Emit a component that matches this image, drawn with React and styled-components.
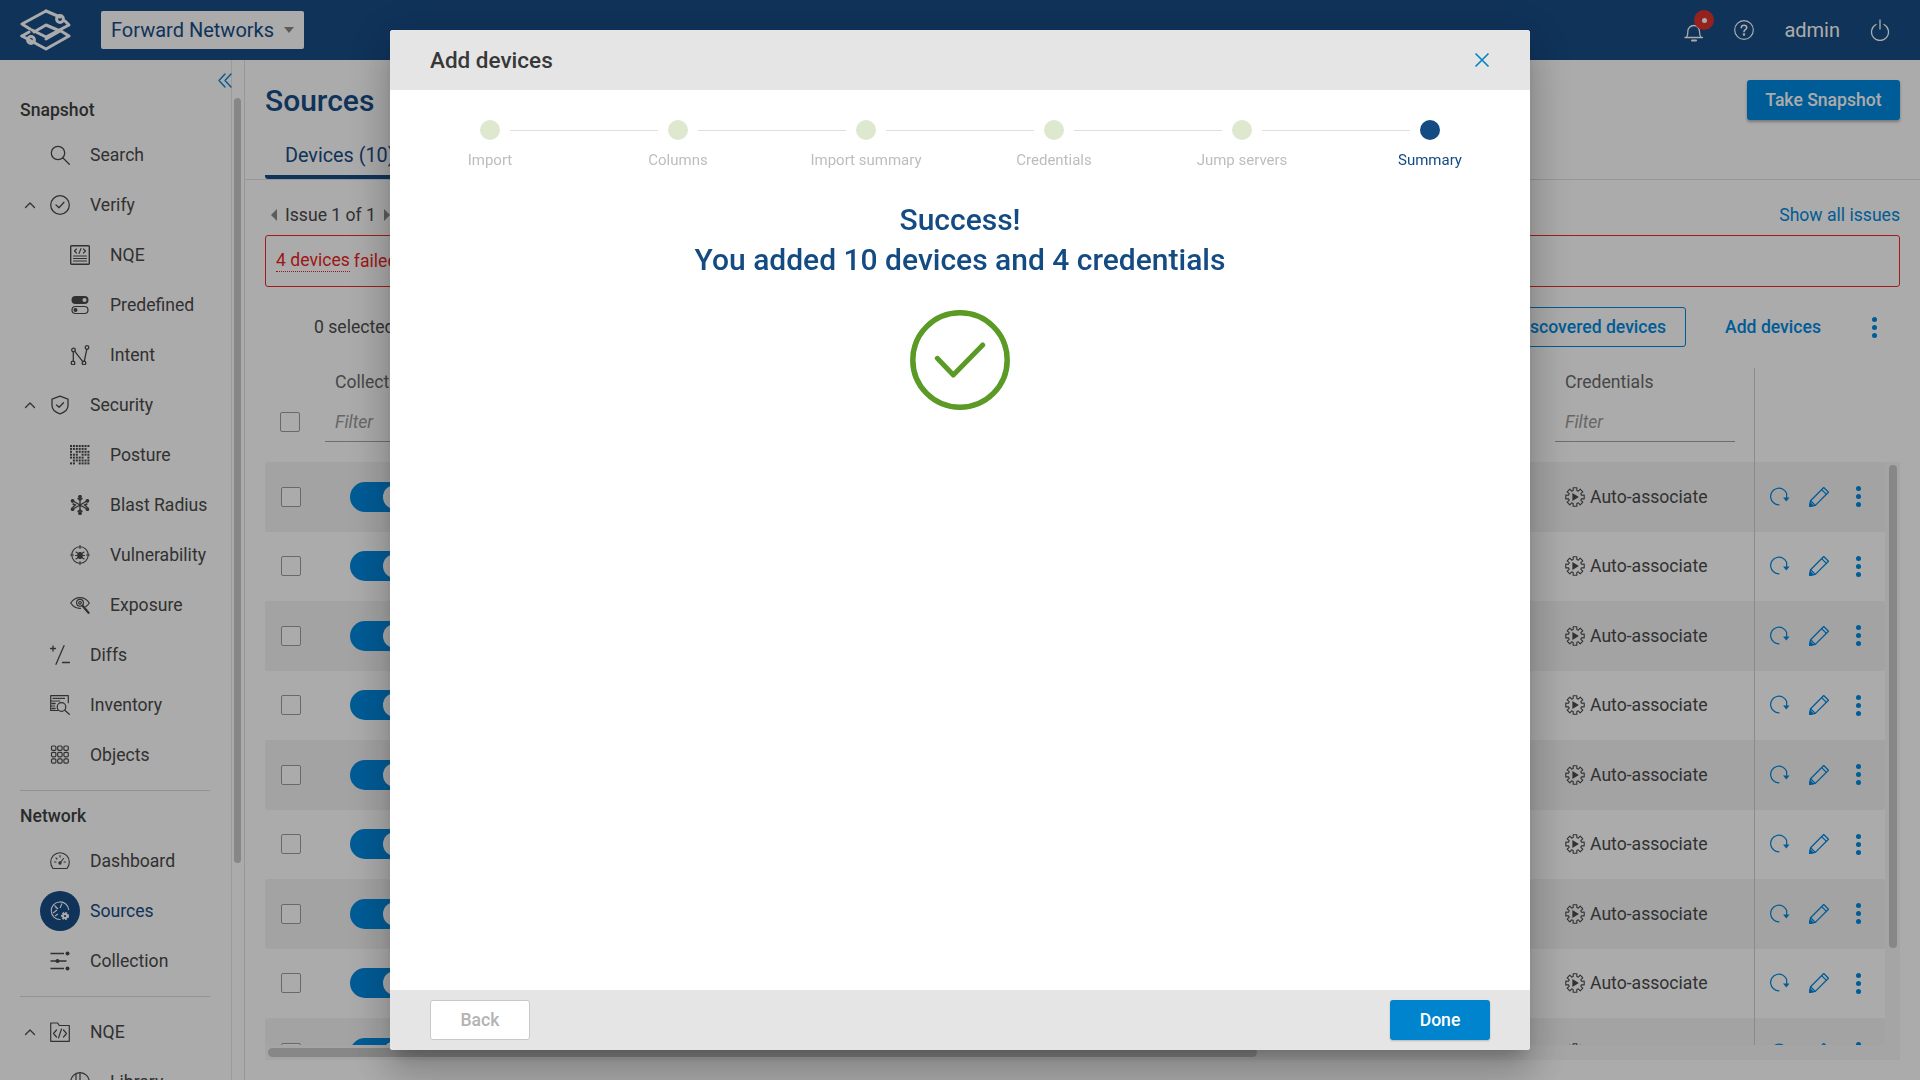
import React from "react";
import styled, { createGlobalStyle } from "styled-components";

const Global = createGlobalStyle`
  html, body { margin: 0; padding: 0; width: 1920px; height: 1080px; overflow: hidden; background: #fff; }
  body { font-family: Roboto, "Liberation Sans", sans-serif; color: #4d4d4d; }
  * { box-sizing: border-box; }
`;

const Page = styled.div`
  width: 1920px; height: 1080px; display: flex; flex-direction: column; overflow: hidden; position: relative;
`;
const TopBar = styled.header`
  height: 60px; flex: none; background: #184c86; display: flex; align-items: center; padding: 0 30px 0 20px; color: #fff;
`;
const OrgSelect = styled.div`
  margin-left: 29px; width: 203px; height: 38px; background: #fff; border-radius: 2px; color: #184c86;
  display: flex; align-items: center; justify-content: space-between; padding: 0 10px 0 10px; font-size: 20px;
`;
const Caret = styled.span`
  width: 0; height: 0; border-left: 5.5px solid transparent; border-right: 5.5px solid transparent; border-top: 6px solid #8a8a8a;
`;
const TopRight = styled.div`
  margin-left: auto; display: flex; align-items: center; color: #fff;
`;
const BellWrap = styled.div`
  position: relative; width: 20px; height: 24px; display: flex; margin-right: 30px; margin-top: 4px;
`;
const Badge = styled.span`
  position: absolute; left: 10px; top: -10px; width: 20px; height: 20px; border-radius: 50%; background: #e0332d;
  display: flex; align-items: center; justify-content: center;
  &::after { content: ""; width: 5px; height: 5px; border-radius: 50%; background: #fff; }
`;
const Admin = styled.span`
  font-size: 20px; margin: 0 30px 0 30px;
`;

const Body = styled.div`
  flex: 1; display: flex; min-height: 0; background: #fff;
`;
const Sidebar = styled.aside`
  width: 245px; flex: none; display: flex; border-right: 1px solid #e2e2e2; overflow: hidden; position: relative;
`;
const Nav = styled.nav`
  width: 231px; flex: none; display: flex; flex-direction: column; padding-top: 30px;
`;
const Collapse = styled.button`
  position: absolute; right: 11px; top: 12px; background: none; border: 0; padding: 0; color: #0a86d8; display: flex;
`;
const SideTrack = styled.div`
  flex: 1; border-left: 1px solid #e8e8e8; padding: 38px 3px 0 2px;
`;
const SideThumb = styled.div`
  height: 765px; background: #c9c9c9; border-radius: 4px;
`;
const NavHead = styled.div`
  height: 40px; flex: none; padding-left: 20px; display: flex; align-items: center; font-size: 17.6px; font-weight: 500; color: #404040;
  margin-top: ${p => p.$mt || 0}px;
`;
const NavRow = styled.div`
  height: 50px; flex: none; display: flex; align-items: center; font-size: 17.6px;
  color: ${p => (p.$active ? "#184c86" : "#4a4a4a")};
  padding-left: ${p => (p.$sub ? 70 : 50)}px; position: relative;
`;
const NavIcon = styled.span`
  width: 20px; height: 20px; flex: none; display: flex; align-items: center; justify-content: center; margin-right: 20px; position: relative; color: ${p => (p.$active ? "#fff" : "#4a4a4a")};
  ${p => p.$active && `
    &::before { content: ""; position: absolute; left: -10px; top: -10px; width: 40px; height: 40px; border-radius: 50%; background: #184c86; }
    svg { position: relative; }
  `}
`;
const Chevron = styled.span`
  position: absolute; left: 23px; top: 18px; display: flex; color: #4a4a4a;
`;
const NavRule = styled.hr`
  border: 0; height: 1px; background: #dcdcdc; margin: ${p => p.$m} 21px ${p => p.$m} 20px; flex: none; width: 190px;
`;

const Main = styled.main`
  flex: 1; min-width: 0; display: flex; flex-direction: column;
`;
const MainHead = styled.div`
  height: 120px; flex: none; border-bottom: 1px solid #e0e0e0; padding: 20px 20px 0; display: flex; flex-direction: column; position: relative;
`;
const TitleRow = styled.div`
  display: flex; justify-content: space-between; align-items: flex-start; height: 64px;
`;
const Title = styled.h1`
  margin: 1px 0 0; font-size: 30px; font-weight: 500; line-height: 40px; color: #184c86;
`;
const Snapshot = styled.button`
  width: 153px; height: 40px; border: 0; border-radius: 3px; background: #0089e0; color: #fff; font: 500 17.6px Roboto, sans-serif;
  box-shadow: 0 2px 3px rgba(0,0,0,.3); margin-right: 0;
`;
const Tab = styled.div`
  width: 180px; height: 36px; padding-left: 20px; border-bottom: 4px solid #184c86; border-radius: 0 0 0 3px; font-size: 19.800px; color: #184c86; line-height: 25px; margin-top: -1px;
`;
const Section = styled.div`
  padding: 0 20px; flex: none;
`;
const IssueRow = styled(Section)`
  height: 55px; padding-top: 20px; display: flex; align-items: flex-start; justify-content: space-between; line-height: 30px;
`;
const Pager = styled.div`
  display: flex; align-items: center; gap: 8px; font-size: 17.6px; color: #4a4a4a; padding-left: 6px; height: 30px;
`;
const Tri = styled.span`
  width: 0; height: 0; border-top: 6px solid transparent; border-bottom: 6px solid transparent;
  ${p => (p.$right ? "border-left: 6px solid #8a8a8a;" : "border-right: 6px solid #8a8a8a;")}
`;
const LinkText = styled.a`
  font-size: 17.6px; color: #0089e0;
`;
const ErrorBox = styled.div`
  margin: 0 20px; height: 52px; flex: none; border: 1px solid #f12a2a; border-radius: 3px; display: flex; align-items: center; padding-left: 10px; font-size: 17.6px; color: #ee1f25;
`;
const Dotted = styled.span`
  border-bottom: 1px dotted #ee1f25; margin-right: 4px; line-height: 21px;
`;
const Toolbar = styled(Section)`
  margin-top: 20px; height: 40px; display: flex; align-items: center; padding-left: 69px; padding-right: 36px; font-size: 17.6px;
`;
const Outlined = styled.button`
  margin-left: auto; width: 190px; height: 40px; border: 1px solid #0089e0; border-radius: 3px; background: #fff; color: #0089e0; font: 500 17.6px Roboto, sans-serif; white-space: nowrap; padding: 0 19px 0 0; text-align: right;
`;
const TextBtn = styled.span`
  margin: 0 43px 0 39px; font-size: 17.6px; font-weight: 500; color: #0089e0;
`;
const Kebab = styled.span`
  width: 20px; display: flex; flex-direction: column; align-items: center; gap: 3px;
  i { width: ${p => p.$d || 5}px; height: ${p => p.$d || 5}px; border-radius: 50%; background: #0089e0; display: block; }
`;
const GridRow = styled.div`
  display: grid; grid-template-columns: 60px 1fr 199px 131px; width: 1620px;
`;
const TableHead = styled(GridRow)`
  margin: 21px 0 0 20px; height: 94px; flex: none;
`;
const HeadCell = styled.div`
  display: flex; flex-direction: column; padding-top: 2px;
`;
const HeadLabel = styled.div`
  font-size: 17.6px; color: #6b6b6b; height: 24px; line-height: 24px; padding-left: 10px;
`;
const FilterBox = styled.div`
  margin-top: 12px; height: 36px; width: ${p => p.$w}px; border-bottom: 1px solid #a5a5a5; padding-left: 10px; font: italic 17.6px/32px Roboto, sans-serif; color: #9a9a9a;
`;
const CheckBox = styled.span`
  width: 20px; height: 20px; border: 1.5px solid #9d9d9d; border-radius: 2px; background: #fff; display: block; flex: none;
`;
const HeadCheck = styled.div`
  padding: 44px 0 0 15px;
`;
const ActionsHead = styled.div`
  border-left: 1px solid #d0d0d0;
`;
const TableZone = styled.div`
  margin-left: 20px; height: 583px; flex: none; display: flex; width: 1635px;
`;
const Rows = styled.div`
  width: 1620px; overflow: hidden;
`;
const Row = styled(GridRow)`
  height: 69.5px; background: ${p => (p.$odd ? "#f3f3f3" : "#fff")}; border-radius: ${p => (p.$odd ? "3px" : 0)};
`;
const CheckCell = styled.div`
  display: flex; align-items: center; padding-left: 16px;
`;
const ToggleCell = styled.div`
  display: flex; align-items: center; padding-left: 25px;
`;
const Toggle = styled.span`
  width: 60px; height: 30px; border-radius: 15px; background: #0089e0; display: flex; align-items: center; justify-content: flex-end; padding-right: 3px;
  &::after { content: ""; width: 24px; height: 24px; border-radius: 50%; background: #fff; }
`;
const CredCell = styled.div`
  display: flex; align-items: center; gap: 5px; padding-left: 10px; font-size: 17.6px; color: #4a4a4a;
`;
const ActionCell = styled.div`
  border-left: 1px solid #d0d0d0; display: flex; align-items: center; color: #0089e0; padding-left: 15px; gap: 19px;
`;
const VTrack = styled.div`
  flex: 1; padding: 3px 3px 0 4px; background: #f7f7f7;
`;
const VThumb = styled.div`
  height: 483px; border-radius: 4px; background: #c9c9c9;
`;
const HTrack = styled.div`
  margin-left: 20px; width: 1635px; height: 15px; flex: none; background: #f7f7f7; padding: 3px 0 0 3px;
`;
const HThumb = styled.div`
  height: 9px; width: 989px; border-radius: 5px; background: #c9c9c9;
`;

const Backdrop = styled.div`
  position: fixed; inset: 0; background: rgba(0,0,0,.33); display: flex; align-items: center; justify-content: center;
`;
const Modal = styled.div`
  width: 1140px; height: 1020px; background: #fff; border-radius: 3px; overflow: hidden; display: flex; flex-direction: column;
  box-shadow: 0 11px 15px -7px rgba(0,0,0,.2), 0 24px 38px 3px rgba(0,0,0,.14), 0 9px 46px 8px rgba(0,0,0,.12);
`;
const ModalHead = styled.div`
  height: 60px; flex: none; background: #e5e5e5; display: flex; align-items: center; justify-content: space-between; padding: 0 39px 0 40px;
  font-size: 22.500px; font-weight: 500; color: #383838;
`;
const Close = styled.span`
  display: flex; color: #0a86c8;
`;
const Stepper = styled.div`
  display: grid; grid-template-columns: repeat(6, 188px); padding: 30px 6px 0; flex: none;
`;
const Step = styled.div`
  display: flex; flex-direction: column; align-items: center;
`;
const DotRow = styled.div`
  display: flex; align-items: center; gap: 10px; width: 100%; height: 20px;
`;
const Line = styled.span`
  flex: 1; height: 1px; background: ${p => (p.$hide ? "transparent" : "#dedede")};
`;
const Dot = styled.span`
  width: 20px; height: 20px; border-radius: 50%; background: ${p => (p.$active ? "#134b82" : "#dde8cf")}; flex: none;
`;
const StepLabel = styled.span`
  margin-top: 10px; font-size: 15px; line-height: 20px; color: ${p => (p.$active ? "#134b82" : "#bdbdbd")};
`;
const Content = styled.div`
  flex: 1; display: flex; flex-direction: column; align-items: center; padding-top: 30px;
`;
const Headline = styled.div`
  font-size: 30px; font-weight: 500; line-height: 40px; color: #134b82; text-align: center;
`;
const SuccessIcon = styled.svg`
  margin-top: 30px; width: 100px; height: 100px;
`;
const ModalFoot = styled.div`
  height: 60px; flex: none; background: #e5e5e5; display: flex; align-items: center; justify-content: space-between; padding: 0 40px;
`;
const BackBtn = styled.button`
  width: 100px; height: 40px; background: #fff; border: 1px solid #c8c8c8; border-radius: 3px; color: #b3b3b3; font: 500 17.6px Roboto, sans-serif;
`;
const DoneBtn = styled.button`
  width: 100px; height: 40px; background: #0084cd; border: 0; border-radius: 3px; color: #fff; font: 500 17.6px Roboto, sans-serif; box-shadow: 0 1px 2px rgba(0,0,0,.2);
`;

const S = ({ children, size = 20, sw = 1.3, vb = 20 }) => (
  <svg width={size} height={size} viewBox={`0 0 ${vb} ${vb}`} fill="none" stroke="currentColor" strokeWidth={sw} strokeLinecap="round" strokeLinejoin="round">{children}</svg>
);

const Logo = () => (
  <svg width="52" height="42" viewBox="0 0 52 42" fill="none" stroke="#fff" strokeWidth="3" strokeLinejoin="round" strokeLinecap="round">
    <path d="M26 2 L40 8" /><path d="M45 12 L49 16 L26 28 L12 21" />
    <path d="M26 2 L2 15 L10 20" />
    <path d="M14 23 L26 16 L40 22 L26 30" />
    <path d="M2 27 L26 40 L49 27 L41 22" />
    <path d="M2 27 L9 23" />
    <circle cx="40" cy="10" r="3.4" /><circle cx="11" cy="31" r="3.4" />
  </svg>
);

const ISearch = () => <S><circle cx="8" cy="8" r="6.7" /><path d="M13 13l6.3 6.3" /></S>;
const ICheckC = () => <S><circle cx="10" cy="10" r="9.3" /><path d="M6 10l3 2.8 5-5.5" /></S>;
const ICode = () => <S><rect x=".7" y=".7" width="18.6" height="18.6" rx=".8" strokeWidth="1.4" /><path d="M6.5 4l-2 2 2 2M13.5 4l2 2-2 2M11 3.5l-2 5M3.5 11h13M3.5 13.5h13M3.5 16h13" strokeWidth="1.1" /></S>;
const IPre = () => (
  <svg width="20" height="20" viewBox="0 0 20 20">
    <rect x="1.5" y="1" width="17" height="8" rx="4" fill="currentColor" /><circle cx="14.5" cy="5" r="2" fill="#fff" />
    <rect x="2" y="11.5" width="16" height="7" rx="3.5" fill="none" stroke="currentColor" strokeWidth="1.2" /><circle cx="5.5" cy="15" r="2" fill="currentColor" />
  </svg>
);
const IIntent = () => <S><circle cx="3.5" cy="5" r="1.8" /><circle cx="17" cy="2.5" r="1.8" /><circle cx="3" cy="18" r="1.8" /><circle cx="14" cy="18" r="1.8" /><path d="M3.3 7v9M4.8 6.3l8.2 10.5M14.3 16l2.5-11.6" /></S>;
const IShield = () => <S><path d="M10 1.2l8 3v6.3c0 4-3.3 6.8-8 8.4-4.7-1.6-8-4.4-8-8.4V4.2z" /><path d="M6.5 10l2.6 2.3 4.4-4.6" /></S>;
const IPosture = () => {
  const c = [];
  for (let y = 0; y < 7; y++) for (let x = 0; x < 7; x++) {
    if ((x * 2 + y * 3) % 7 === 1 && y > 0) continue;
    c.push(<rect key={`${x}-${y}`} x={x * 2.9} y={y * 2.9} width="2" height="2" fill="currentColor" />);
  }
  return <svg width="20" height="20" viewBox="0 0 20 20">{c}</svg>;
};
const IBlast = () => (
  <S sw={1.4}>
    <path d="M10 2v16M3 6l14 8M17 6L3 14M8 3.5l2 2 2-2M8 16.5l2-2 2 2M3 9l2.5 1L3 12M17 9l-2.5 1 2.5 2" />
    <circle cx="10" cy="1.8" r="1.2" fill="currentColor" /><circle cx="10" cy="18.2" r="1.2" fill="currentColor" />
    <circle cx="2.6" cy="5.8" r="1.2" fill="currentColor" /><circle cx="17.4" cy="5.8" r="1.2" fill="currentColor" />
    <circle cx="2.6" cy="14.2" r="1.2" fill="currentColor" /><circle cx="17.4" cy="14.2" r="1.2" fill="currentColor" />
  </S>
);
const IVuln = () => (
  <S sw={1.1}>
    <circle cx="10" cy="10" r="8.2" /><path d="M10 .5v3M10 16.5v3M.5 10h3M16.5 10h3" />
    <ellipse cx="10" cy="10.5" rx="2.2" ry="3" fill="currentColor" /><path d="M6 7l2 1.5M14 7l-2 1.5M5.5 10.5h2M14.5 10.5h-2M6 14l2-1.5M14 14l-2-1.5" />
  </S>
);
const IEye = () => (
  <S sw={1.2}>
    <path d="M.7 8C3 4.5 6.3 2.7 10 2.7S17 4.5 19.3 8c-1 1.6-2.2 2.8-3.6 3.7M10.500 13.300C6.500 13.500 3 11.500.7 8" />
    <circle cx="10" cy="7.800" r="3.400" /><circle cx="10" cy="7.800" r="1.300" /><path d="M12.800 11l5.700 6.800" strokeWidth="2.200" />
  </S>
);
const IDiff = () => <S sw={1.3}><path d="M3 1v5M.5 3.500h5M14 .7L6 19.300M12.500 17.500h7" /></S>;
const IInv = () => (
  <S sw={1.2}>
    <path d="M8 15.500H.7V.7h17.600v7" /><path d="M.7 6h10M.7 11h5M3 3.300h12" strokeDasharray="1.500 1" />
    <circle cx="11.500" cy="12" r="4.300" /><path d="M14.800 15.300l4.500 4" />
    <path d="M2 8.500h3M2 13.500h3" strokeWidth="1.500" />
  </S>
);
const IObj = () => {
  const c = [];
  for (let y = 0; y < 3; y++) for (let x = 0; x < 3; x++) c.push(<rect key={`${x}${y}`} x={1.5 + x * 6.2} y={1 + y * 6.4} width="4.400" height="4.400" rx="1.200" />);
  return <S sw={1.2}>{c}</S>;
};
const IGauge = () => (
  <S sw={1.1}>
    <path d="M3 17.500C1.500 15.700.7 13.500.7 11a9.300 9.300 0 0 1 18.600 0c0 2.500-.8 4.700-2.300 6.500z" />
    <path d="M10 4.500v1.500M4.500 11h1.500M14 11h1.500M6 7l1 1M10 12l3.500-4.500" /><circle cx="10" cy="12" r="1.100" fill="currentColor" />
  </S>
);
const ISources = () => (
  <svg width="20" height="20" viewBox="0 0 20 20" fill="none" stroke="currentColor" strokeWidth="1.1">
    <path d="M10.500 18.500A8.800 8.800 0 1 1 18.800 9" />
    <path d="M4.500 4.500l3.500 3.500M12 2.500l-2 4.500M3 12l4-3M6 7.500v-2M8 13l-3 2" />
    <circle cx="15" cy="15" r="3" fill="currentColor" strokeWidth="2" strokeDasharray="1.800 1" />
    <circle cx="15" cy="15" r="1.100" fill="#184c86" stroke="none" />
  </svg>
);
const ICollect = () => (
  <svg width="20" height="20" viewBox="0 0 20 20" stroke="currentColor" strokeWidth="1.300" fill="currentColor">
    <path d="M.5 2.500H14M.5 10h16M.5 17.500H14" /><circle cx="17.500" cy="2.500" r="2" stroke="none" /><circle cx="7.500" cy="10" r="2" stroke="none" /><circle cx="17.500" cy="17.500" r="2" stroke="none" />
  </svg>
);
const IFolder = () => <S sw={1.2}><path d="M.7 19.300V1h7l1.500 2.500h10.100v15.800z" /><path d="M6.500 8l-3 3.500 3 3.500M13.500 8l3 3.500-3 3.500M11.500 7l-3 9" /></S>;
const ILib = () => <S sw={1.2}><circle cx="10" cy="10" r="9.300" /><path d="M10 .7V10h9M6 2v16" /></S>;
const IChevUp = () => <svg width="14" height="14" viewBox="0 0 14 14" fill="none" stroke="currentColor" strokeWidth="1.300" strokeLinecap="round" strokeLinejoin="round"><path d="M2.500 9.500L7 5l4.500 4.500" /></svg>;
const ICollapse = () => <svg width="16" height="18" viewBox="0 0 16 18" fill="none" stroke="currentColor" strokeWidth="1.400" strokeLinecap="round" strokeLinejoin="round"><path d="M8 2L2 8.500 8 15M14 2L8 8.500l6 6.500" /></svg>;
const IBell = () => (
  <svg width="20" height="24" viewBox="0 0 20 24" fill="none" stroke="currentColor" strokeWidth="1.300" strokeLinecap="round" strokeLinejoin="round">
    <path d="M1 17.500h17.500M2.500 17.500c1.500-2 1.300-4 1.300-6 0-3.500 2.700-6 6-6 3 0 5.700 2.500 5.700 6 0 2 .1 4 1.500 6" /><path d="M8 20.500h4" strokeWidth="2" />
  </svg>
);
const IHelp = () => (
  <svg width="20" height="20" viewBox="0 0 20 20" fill="none" stroke="currentColor" strokeWidth="1.200" strokeLinecap="round">
    <circle cx="10" cy="10" r="9.300" /><path d="M7.300 7.800c0-1.500 1.200-2.600 2.700-2.600s2.700 1.100 2.700 2.500c0 2-2.700 2-2.700 4" strokeWidth="1.600" /><circle cx="10" cy="14.500" r=".7" fill="currentColor" />
  </svg>
);
const IPower = () => (
  <svg width="20" height="22" viewBox="0 0 20 22" fill="none" stroke="currentColor" strokeWidth="1.300" strokeLinecap="round">
    <path d="M6 5.500a8.500 8.500 0 1 0 8 0M10 1v9" />
  </svg>
);
const IX = () => <svg width="18" height="18" viewBox="0 0 18 18" fill="none" stroke="currentColor" strokeWidth="1.700"><path d="M2.500 2.500l13 13M15.500 2.500l-13 13" /></svg>;

const gearPath = (() => {
  const pts = [];
  for (let i = 0; i < 8; i++) {
    const c = (i * Math.PI) / 4;
    [[-0.27, 6.7], [-0.2, 9.4], [0.2, 9.4], [0.27, 6.7]].forEach(([da, r]) => {
      pts.push(`${(r * Math.sin(c + da)).toFixed(2)} ${(-r * Math.cos(c + da)).toFixed(2)}`);
    });
  }
  return `M${pts.join("L")}Z`;
})();
const IAuto = () => (
  <svg width="20" height="20" viewBox="-10 -10 20 20" fill="none" stroke="currentColor" strokeWidth="1.100" strokeLinejoin="round">
    <path d={gearPath} />
    <path d="M-2.600 -3.900L3.900 0L-2.600 3.900Z" fill="currentColor" stroke="none" />
  </svg>
);
const IRedo = () => (
  <svg width="20" height="20" viewBox="0 0 20 20" fill="none" stroke="currentColor" strokeWidth="1.200" strokeLinecap="round">
    <path d="M10 18.300a8.300 8.300 0 1 1 7.600-11.500L17.700 11" transform="translate(-1 -.5)" />
    <path d="M13 10.500h6.500l-3.200 4z" fill="currentColor" stroke="none" />
  </svg>
);
const IEdit = () => (
  <svg width="20" height="20" viewBox="0.5 0.5 19 19" fill="none" stroke="currentColor" strokeWidth="1.200" strokeLinejoin="round">
    <path d="M1 19l1-5.500L14.500 1l4.500 4.500L6.500 18z" /><path d="M12.500 3l4.500 4.500M2 13.500l4.500 4.500" /><path d="M1 19l.7-3.300 2.600 2.600z" fill="currentColor" />
  </svg>
);

const Dots = ({ d }) => <Kebab $d={d}><i /><i /><i /></Kebab>;

const top = [
  ["Search", ISearch], ["Verify", ICheckC, "g"], ["NQE", ICode, "s"], ["Predefined", IPre, "s"], ["Intent", IIntent, "s"],
  ["Security", IShield, "g"], ["Posture", IPosture, "s"], ["Blast Radius", IBlast, "s"], ["Vulnerability", IVuln, "s"], ["Exposure", IEye, "s"],
  ["Diffs", IDiff], ["Inventory", IInv], ["Objects", IObj],
];
const net = [["Dashboard", IGauge], ["Sources", ISources, "a"], ["Collection", ICollect]];
const steps = ["Import", "Columns", "Import summary", "Credentials", "Jump servers", "Summary"];

const Item = ({ label, Icon, kind }) => (
  <NavRow $sub={kind === "s"} $active={kind === "a"}>
    {kind === "g" && <Chevron><IChevUp /></Chevron>}
    <NavIcon $active={kind === "a"}><Icon /></NavIcon>
    {label}
  </NavRow>
);

export default function App() {
  return (
    <Page>
      <Global />
      <TopBar>
        <Logo />
        <OrgSelect>Forward Networks<Caret /></OrgSelect>
        <TopRight>
          <BellWrap><IBell /><Badge /></BellWrap>
          <IHelp />
          <Admin>admin</Admin>
          <IPower />
        </TopRight>
      </TopBar>
      <Body>
        <Sidebar>
          <Collapse><ICollapse /></Collapse>
          <Nav>
            <NavHead>Snapshot</NavHead>
            {top.map(([l, I, k]) => <Item key={l} label={l} Icon={I} kind={k} />)}
            <NavRule $m="10px" />
            <NavHead $mt={-5}>Network</NavHead>
            {net.map(([l, I, k]) => <Item key={l} label={l} Icon={I} kind={k} />)}
            <NavRule $m="10px" />
            <Item label="NQE" Icon={IFolder} kind="g" />
            <Item label="Library" Icon={ILib} kind="s" />
          </Nav>
          <SideTrack><SideThumb /></SideTrack>
        </Sidebar>
        <Main>
          <MainHead>
            <TitleRow>
              <Title>Sources</Title>
              <Snapshot>Take Snapshot</Snapshot>
            </TitleRow>
            <Tab>Devices (10)</Tab>
          </MainHead>
          <IssueRow>
            <Pager><Tri />Issue 1 of 1<Tri $right /></Pager>
            <LinkText>Show all issues</LinkText>
          </IssueRow>
          <ErrorBox><Dotted>4 devices</Dotted>failed</ErrorBox>
          <Toolbar>
            0 selected
            <Outlined>Discovered devices</Outlined>
            <TextBtn>Add devices</TextBtn>
            <Dots />
          </Toolbar>
          <TableHead>
            <HeadCheck><CheckBox /></HeadCheck>
            <HeadCell><HeadLabel>Collect</HeadLabel><FilterBox $w={200}>Filter</FilterBox></HeadCell>
            <HeadCell><HeadLabel>Credentials</HeadLabel><FilterBox $w={180}>Filter</FilterBox></HeadCell>
            <ActionsHead />
          </TableHead>
          <TableZone>
            <Rows>
              {Array.from({ length: 9 }, (_, i) => (
                <Row key={i} $odd={i % 2 === 0}>
                  <CheckCell><CheckBox /></CheckCell>
                  <ToggleCell><Toggle /></ToggleCell>
                  <CredCell><IAuto />Auto-associate</CredCell>
                  <ActionCell><IRedo /><IEdit /><Dots d={5} /></ActionCell>
                </Row>
              ))}
            </Rows>
            <VTrack><VThumb /></VTrack>
          </TableZone>
          <HTrack><HThumb /></HTrack>
        </Main>
      </Body>
      <Backdrop>
        <Modal>
          <ModalHead>Add devices<Close><IX /></Close></ModalHead>
          <Stepper>
            {steps.map((s, i) => (
              <Step key={s}>
                <DotRow>
                  <Line $hide={i === 0} />
                  <Dot $active={i === 5} />
                  <Line $hide={i === 5} />
                </DotRow>
                <StepLabel $active={i === 5}>{s}</StepLabel>
              </Step>
            ))}
          </Stepper>
          <Content>
            <Headline>Success!<br />You added 10 devices and 4 credentials</Headline>
            <SuccessIcon viewBox="0 0 100 100" fill="none" stroke="#5c9a26" strokeLinecap="round" strokeLinejoin="round">
              <circle cx="50" cy="50" r="47.200" strokeWidth="5.500" />
              <path d="M27.300 48.300L43.300 65 72.700 35" strokeWidth="5" />
            </SuccessIcon>
          </Content>
          <ModalFoot><BackBtn>Back</BackBtn><DoneBtn>Done</DoneBtn></ModalFoot>
        </Modal>
      </Backdrop>
    </Page>
  );
}
